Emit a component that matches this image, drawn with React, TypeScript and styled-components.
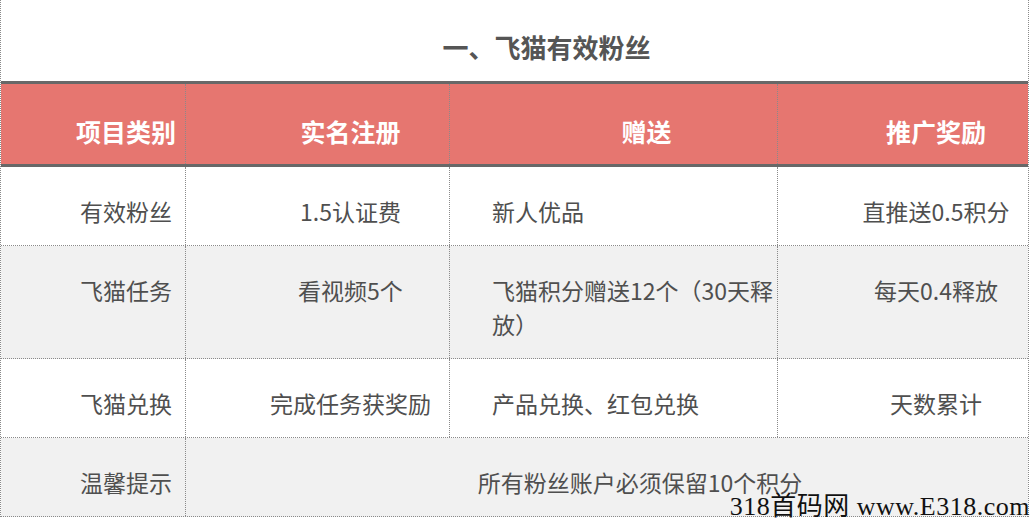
import React from "react";
import styled, { createGlobalStyle } from "styled-components";

const Global = createGlobalStyle`
  html, body { margin: 0; padding: 0; background: #fff; }
  body { font-family: "Noto Sans CJK SC", "Noto Sans", sans-serif; overflow: hidden; }
`;

const Page = styled.div`
  position: relative;
  width: 1030px;
  height: 518px;
  overflow: hidden;
`;

const Sheet = styled.div`
  box-sizing: border-box;
  width: 1029px;
  border-left: 1px dotted #8a8a8a;
  border-right: 1px dotted #8a8a8a;
`;

const Title = styled.div`
  box-sizing: border-box;
  height: 81px;
  padding: 30px 0 17px 64px;
  text-align: center;
  font-size: 26px;
  line-height: 34px;
  font-weight: 700;
  color: #555;
`;

const Row = styled.div<{ $shade?: boolean; $head?: boolean }>`
  display: grid;
  grid-template-columns: 184px 264px 328px 1fr;
  background: ${(p) => (p.$head ? "#e67670" : p.$shade ? "#f1f1f1" : "#fff")};
  border-top: ${(p) => (p.$head ? "3px solid #686868" : "none")};
  border-bottom: ${(p) => (p.$head ? "3px solid #686868" : "1px dotted #8a8a8a")};
`;

const Cell = styled.div<{ $head?: boolean; $left?: boolean; $first?: boolean; $span?: number }>`
  box-sizing: border-box;
  ${(p) => (p.$span ? `grid-column: span ${p.$span};` : "")}
  border-left: ${(p) => (p.$first ? "none" : "1px dotted #8a8a8a")};
  padding: ${(p) => (p.$head ? "30px 0 16px 66px" : `27px 0 17px ${p.$left ? 42 : 66}px`)};
  text-align: ${(p) => (p.$left ? "left" : "center")};
  font-size: ${(p) => (p.$head ? "25px" : "23px")};
  font-weight: ${(p) => (p.$head ? 700 : 400)};
  line-height: 34px;
  color: ${(p) => (p.$head ? "#fff" : "#4f4f4f")};
`;

const Watermark = styled.div`
  position: absolute;
  right: 0;
  bottom: -6px;
  font-family: "Liberation Serif", "Noto Sans CJK SC", serif;
  font-size: 26px;
  line-height: 34px;
  color: #111;
  white-space: nowrap;
  letter-spacing: 0.5px;
`;

const rows = [
  ["有效粉丝", "1.5认证费", "新人优品", "直推送0.5积分"],
  ["飞猫任务", "看视频5个", "飞猫积分赠送12个（30天释放）", "每天0.4释放"],
  ["飞猫兑换", "完成任务获奖励", "产品兑换、红包兑换", "天数累计"],
];

export default function App() {
  return (
    <Page>
      <Global />
      <Sheet>
        <Title>一、飞猫有效粉丝</Title>
        <Row $head>
          <Cell $head $first>项目类别</Cell>
          <Cell $head>实名注册</Cell>
          <Cell $head>赠送</Cell>
          <Cell $head>推广奖励</Cell>
        </Row>
        {rows.map((r, i) => (
          <Row key={i} $shade={i % 2 === 1}>
            <Cell $first>{r[0]}</Cell>
            <Cell>{r[1]}</Cell>
            <Cell $left>{r[2]}</Cell>
            <Cell>{r[3]}</Cell>
          </Row>
        ))}
        <Row $shade>
          <Cell $first>温馨提示</Cell>
          <Cell $span={3}>所有粉丝账户必须保留10个积分</Cell>
        </Row>
      </Sheet>
      <Watermark>318首码网 www.E318.com</Watermark>
    </Page>
  );
}
